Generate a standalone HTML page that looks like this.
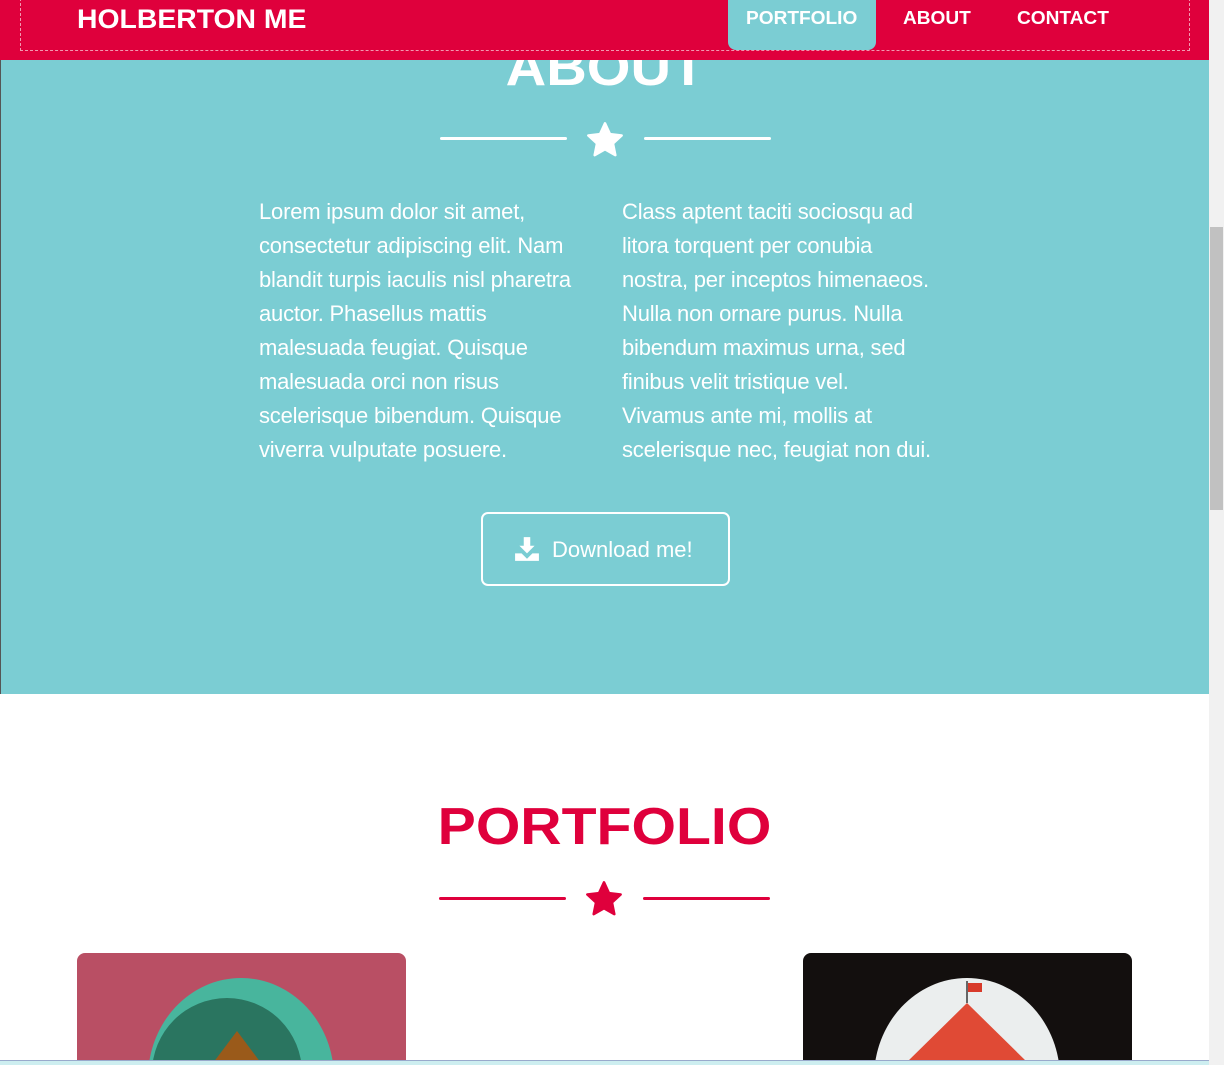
<!DOCTYPE html>
<html><head><meta charset="utf-8"><style>
*{margin:0;padding:0;box-sizing:border-box}
html,body{width:1224px;height:1065px;overflow:hidden}
body{background:#fff;font-family:"Liberation Sans",sans-serif;position:relative}
.nav{position:absolute;left:0;top:0;width:1209px;height:60px;background:#df003c;z-index:5}
.dash{position:absolute;left:20px;top:-2px;width:1170px;height:53px;border:1px dashed rgba(255,255,255,.6);border-top:none}
.logo{position:absolute;left:77px;top:4px;color:#fff;font-weight:bold;font-size:27px;transform:scaleX(1.05);transform-origin:left}
.tab{position:absolute;left:728px;top:0;width:148px;height:50px;background:#7bcdd3;border-radius:0 0 8px 8px}
.nl{position:absolute;top:8px;color:#fff;font-weight:bold;font-size:18px;transform:scaleX(1.06);transform-origin:left}
.about{position:absolute;left:0;top:0;width:1209px;height:694px;background:#7bcdd3;border-left:1px solid #555}
.h{position:absolute;left:0;width:1209px;text-align:center;font-weight:bold}
.line{position:absolute;height:3px;width:127px;border-radius:2px}
.col{position:absolute;top:195px;color:#fff;font-size:22px;line-height:34px;white-space:nowrap;letter-spacing:-0.2px}
.btn{position:absolute;left:480px;top:512px;width:249px;height:74px;border:2px solid #fff;border-radius:7px;color:#fff;font-size:22px}
.card{position:absolute;top:953px;width:329px;height:107px;border-radius:8px 8px 0 0;overflow:hidden}
.sb{position:absolute;left:1209px;top:0;width:15px;height:1065px;background:#f1f1f1}
.thumb{position:absolute;left:1210px;top:227px;width:13px;height:283px;background:#c1c1c1}
</style></head><body>
<div class="about">
 <div class="h" style="top:38px;font-size:52px;color:#fff;transform:scaleX(1.08)">ABOUT</div>
 <div class="line" style="left:439px;top:137px;background:#fff"></div>
 <div class="line" style="left:643px;top:137px;background:#fff"></div>
 <svg style="position:absolute;left:584px;top:120px" width="40" height="40" viewBox="0 0 24 24"><path d="M12 2l3 6.5 7 .8-5.2 4.8 1.4 7L12 17.6 5.8 21.1l1.4-7L2 9.3l7-.8z" fill="#fff" stroke="#fff" stroke-width="1.5" stroke-linejoin="round"/></svg>
 <div class="col" style="left:258px">Lorem ipsum dolor sit amet,<br>consectetur adipiscing elit. Nam<br>blandit turpis iaculis nisl pharetra<br>auctor. Phasellus mattis<br>malesuada feugiat. Quisque<br>malesuada orci non risus<br>scelerisque bibendum. Quisque<br>viverra vulputate posuere.</div>
 <div class="col" style="left:621px">Class aptent taciti sociosqu ad<br>litora torquent per conubia<br>nostra, per inceptos himenaeos.<br>Nulla non ornare purus. Nulla<br>bibendum maximus urna, sed<br>finibus velit tristique vel.<br>Vivamus ante mi, mollis at<br>scelerisque nec, feugiat non dui.</div>
 <div class="btn">
  <svg style="position:absolute;left:31px;top:22px" width="26" height="26" viewBox="0 0 24 24"><path d="M9 1h6v8h4l-7 7-7-7h4z" fill="#fff"/><path d="M1 16h6l5 5 5-5h6v7H1z" fill="#fff"/></svg>
  <span style="position:absolute;left:69px;top:23px">Download me!</span>
 </div>
</div>
<div class="nav">
 <div class="dash"></div>
 <div class="logo">HOLBERTON ME</div>
 <div class="tab"></div>
 <div class="nl" style="left:746px">PORTFOLIO</div>
 <div class="nl" style="left:903px">ABOUT</div>
 <div class="nl" style="left:1017px">CONTACT</div>
</div>
<div class="h" style="top:797px;font-size:52px;color:#df003c;transform:scaleX(1.1)">PORTFOLIO</div>
<div class="line" style="left:439px;top:897px;background:#df003c"></div>
<div class="line" style="left:643px;top:897px;background:#df003c"></div>
<svg style="position:absolute;left:584px;top:879px" width="40" height="40" viewBox="0 0 24 24"><path d="M12 2l3 6.5 7 .8-5.2 4.8 1.4 7L12 17.6 5.8 21.1l1.4-7L2 9.3l7-.8z" fill="#df003c" stroke="#df003c" stroke-width="1.5" stroke-linejoin="round"/></svg>
<div class="card" style="left:77px;background:#b94f64">
 <div style="position:absolute;left:71px;top:25px;width:186px;height:200px;border-radius:50%;background:#48b59d"></div>
 <div style="position:absolute;left:75px;top:45px;width:150px;height:150px;border-radius:50%;background:#2a7560"></div>
 <div style="position:absolute;left:130px;top:78px;width:0;height:0;border-left:30px solid transparent;border-right:30px solid transparent;border-bottom:40px solid #9a5a1a"></div>
</div>
<div class="card" style="left:803px;background:#130f0e">
 <div style="position:absolute;left:71px;top:25px;width:186px;height:200px;border-radius:50%;background:#ebeeee"></div>
 <div style="position:absolute;left:163px;top:28px;width:2px;height:22px;background:#666"></div>
 <div style="position:absolute;left:165px;top:30px;width:14px;height:9px;background:#d83a2a"></div>
 <div style="position:absolute;left:103px;top:50px;width:0;height:0;border-left:61px solid transparent;border-right:61px solid transparent;border-bottom:60px solid #e04a35"></div>
</div>
<div class="sb"></div><div class="thumb"></div>
<div style="position:absolute;left:0;top:1060px;width:1209px;height:5px;background:#cdeef0;border-top:1px solid #9ac"></div>
</body></html>
